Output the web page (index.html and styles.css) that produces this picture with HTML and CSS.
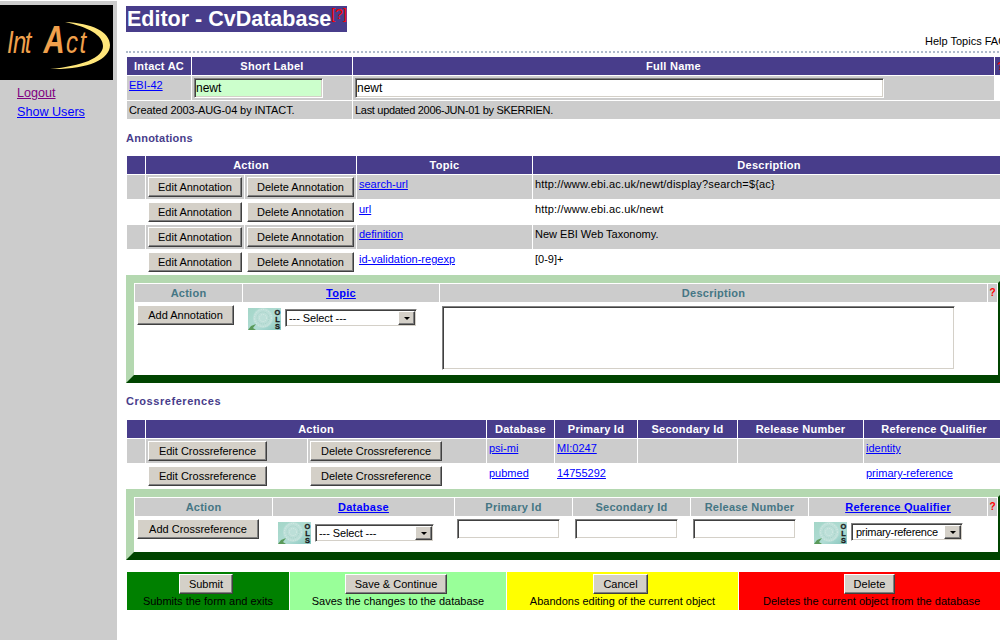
FILE: index.html
```html
<!DOCTYPE html>
<html lang="en">
<head>
<meta charset="utf-8">
<title>Editor - CvDatabase</title>
<link rel="stylesheet" href="styles.css">
</head>
<body>
<svg class="defs" width="0" height="0" aria-hidden="true">
  <defs>
    <linearGradient id="olsbg" x1="0" y1="0" x2="1" y2="1">
      <stop offset="0" stop-color="#a4d6c8"/>
      <stop offset="0.6" stop-color="#b0dcd4"/>
      <stop offset="1" stop-color="#84c4bc"/>
    </linearGradient>
    <symbol id="ols" viewBox="0 0 33 22">
      <rect width="33" height="22" fill="url(#olsbg)"/>
      <circle cx="15" cy="10" r="10" fill="#bcdfd8"/>
      <circle cx="15" cy="10" r="8.5" fill="none" stroke="#d8ece6" stroke-dasharray="1 1.5"/>
      <circle cx="15" cy="10" r="6" fill="none" stroke="#a4d0c6" stroke-dasharray="1 1"/>
      <circle cx="15" cy="10" r="3.5" fill="none" stroke="#d8ece6" stroke-dasharray="1 1"/>
      <path d="M0 22 L3 18 L8 16 L5 20 L8 22 Z" fill="#5a9a5a"/>
      <text x="29.5" y="7" class="ols-t">O</text>
      <text x="29.5" y="14" class="ols-t">L</text>
      <text x="29.5" y="21" class="ols-t">S</text>
    </symbol>
  </defs>
</svg>
<aside class="side">
  <svg class="logo" width="113" height="75" viewBox="0 0 113 75" role="img" aria-label="IntAct">
    <rect width="113" height="75" fill="#000"/>
    <path d="M65 17 C92 18 110 27 110 40 C110 55 86 65 50 64 C82 61 103 53 103 41 C103 30 88 22 65 17 Z" fill="#ffe67a"/>
    <g transform="scale(.75 1)">
      <text x="9.3 17.5 33" y="48" class="logo-t">Int</text>
      <text x="58" y="48" class="logo-a">A</text>
      <text x="88 106" y="48" class="logo-t">ct</text>
    </g>
  </svg>
  <nav class="side-nav">
    <a class="visited" href="#">Logout</a>
    <a href="#">Show Users</a>
  </nav>
</aside>
<main class="main">
  <h1 class="title">Editor - CvDatabase<sup class="title-help">[?]</sup></h1>
  <div class="toplinks">Help Topics FAQ</div>
  <hr class="dots">

  <table class="grid t-cv">
    <colgroup><col class="c64"><col class="c160"><col class="c641"><col class="c12"></colgroup>
    <tr class="head"><th>Intact AC</th><th>Short Label</th><th>Full Name</th><th class="q">?</th></tr>
    <tr class="gray tall">
      <td><a href="#">EBI-42</a></td>
      <td><input class="field shortlabel" value="newt"></td>
      <td><input class="field fullname" value="newt"></td>
      <td class="blank"></td>
    </tr>
    <tr class="gray">
      <td colspan="2" class="created">Created 2003-AUG-04 by INTACT.</td>
      <td colspan="2" class="updated">Last updated 2006-JUN-01 by SKERRIEN.</td>
    </tr>
  </table>

  <h2 class="section s-ann">Annotations</h2>
  <table class="grid t-ann">
    <colgroup><col class="c18"><col class="c98"><col class="c111"><col class="c175"><col class="c472"></colgroup>
    <tr class="head"><th></th><th colspan="2">Action</th><th>Topic</th><th>Description</th></tr>
    <tr class="gray">
      <td></td><td><button class="btn w94">Edit Annotation</button></td><td><button class="btn w107">Delete Annotation</button></td>
      <td><a href="#">search-url</a></td><td class="wide">http://www.ebi.ac.uk/newt/display?search=${ac}</td>
    </tr>
    <tr>
      <td></td><td><button class="btn w94">Edit Annotation</button></td><td><button class="btn w107">Delete Annotation</button></td>
      <td><a href="#">url</a></td><td class="wide">http://www.ebi.ac.uk/newt</td>
    </tr>
    <tr class="gray">
      <td></td><td><button class="btn w94">Edit Annotation</button></td><td><button class="btn w107">Delete Annotation</button></td>
      <td><a href="#">definition</a></td><td>New EBI Web Taxonomy.</td>
    </tr>
    <tr>
      <td></td><td><button class="btn w94">Edit Annotation</button></td><td><button class="btn w107">Delete Annotation</button></td>
      <td><a href="#">id-validation-regexp</a></td><td>[0-9]+</td>
    </tr>
  </table>

  <section class="panel">
    <table class="grid t-newann">
      <colgroup><col class="c107"><col class="c196"><col class="c547"><col class="c9"></colgroup>
      <tr class="subhead"><th>Action</th><th><a href="#">Topic</a></th><th>Description</th><th class="q">?</th></tr>
      <tr>
        <td><button class="btn w97">Add Annotation</button></td>
        <td>
          <div class="picker">
            <svg class="ols" width="33" height="22"><use href="#ols"/></svg>
            <span class="sel w132"><select><option>--- Select ---</option></select></span>
          </div>
        </td>
        <td><textarea class="field desc"></textarea></td>
        <td></td>
      </tr>
    </table>
  </section>

  <h2 class="section s-xref">Crossreferences</h2>
  <table class="grid t-xref">
    <colgroup><col class="c18"><col class="c161"><col class="c178"><col class="c67"><col class="c82"><col class="c99"><col class="c125"><col class="c140"></colgroup>
    <tr class="head"><th></th><th colspan="2">Action</th><th>Database</th><th>Primary Id</th><th>Secondary Id</th><th>Release Number</th><th>Reference Qualifier</th></tr>
    <tr class="gray">
      <td></td><td><button class="btn w119">Edit Crossreference</button></td><td class="inset"><button class="btn w132">Delete Crossreference</button></td>
      <td><a href="#">psi-mi</a></td><td><a href="#">MI:0247</a></td><td></td><td></td><td><a href="#">identity</a></td>
    </tr>
    <tr>
      <td></td><td><button class="btn w119">Edit Crossreference</button></td><td class="inset"><button class="btn w132">Delete Crossreference</button></td>
      <td><a href="#">pubmed</a></td><td><a href="#">14755292</a></td><td></td><td></td><td><a href="#">primary-reference</a></td>
    </tr>
  </table>

  <section class="panel">
    <table class="grid t-newxref">
      <colgroup><col class="c137"><col class="c181"><col class="c117"><col class="c117"><col class="c117"><col class="c178"><col class="c9"></colgroup>
      <tr class="subhead"><th>Action</th><th><a href="#">Database</a></th><th>Primary Id</th><th>Secondary Id</th><th>Release Number</th><th><a href="#">Reference Qualifier</a></th><th class="q">?</th></tr>
      <tr>
        <td><button class="btn w122">Add Crossreference</button></td>
        <td>
          <div class="picker">
            <svg class="ols" width="33" height="22"><use href="#ols"/></svg>
            <span class="sel w119 low"><select><option>--- Select ---</option></select></span>
          </div>
        </td>
        <td><input class="field idfield"></td>
        <td><input class="field idfield"></td>
        <td><input class="field idfield"></td>
        <td>
          <div class="picker">
            <svg class="ols" width="33" height="22"><use href="#ols"/></svg>
            <span class="sel w112"><select><option>primary-reference</option></select></span>
          </div>
        </td>
        <td></td>
      </tr>
    </table>
  </section>

  <table class="grid t-actions">
    <colgroup><col class="c162"><col class="c216"><col class="c231"><col class="c265"></colgroup>
    <tr>
      <td class="a-submit"><button class="btn w54">Submit</button><div>Submits the form and exits</div></td>
      <td class="a-save"><button class="btn w102">Save &amp; Continue</button><div>Saves the changes to the database</div></td>
      <td class="a-cancel"><button class="btn w55">Cancel</button><div>Abandons editing of the current object</div></td>
      <td class="a-delete"><button class="btn w51">Delete</button><div>Deletes the current object from the database</div></td>
    </tr>
  </table>
</main>
</body>
</html>
```
FILE: styles.css
```css
* { box-sizing: border-box; }
html, body { margin: 0; height: 640px; overflow: hidden; background: #fff; }
body {
  display: flex;
  font: 11px/14px "Liberation Sans", Arial, sans-serif;
  color: #000;
}
.defs { position: absolute; }
a { color: #00f; }
a.visited { color: #800080; }

.side {
  flex: 0 0 117px;
  margin-top: 1px;
  padding-top: 4px;
  background: #ccc;
}
.logo { display: block; }
.logo-t { font: italic 32px "Liberation Sans", Arial, sans-serif; fill: #f0a04c; }
.logo-a { font: italic 700 39px "Liberation Sans", Arial, sans-serif; fill: #f0a04c; }
.ols-t { font: 900 7.5px "Liberation Sans", Arial, sans-serif; fill: #1a1a1a; stroke: #1a1a1a; stroke-width: .3; text-anchor: middle; }
.side-nav {
  display: flex;
  flex-direction: column;
  gap: 4px;
  padding: 6px 0 0 17px;
  font-size: 12.6px;
  line-height: 15px;
  align-items: flex-start;
}

.main { flex: 1 1 0; min-width: 0; overflow: hidden; padding-left: 9px; }
.title {
  display: inline-block;
  margin: 6px 0 0;
  height: 26px;
  padding: 1px 0 0 1px;
  background: #483d8b;
  color: #fff;
  font-size: 21.5px;
  line-height: 25px;
  white-space: nowrap;
  vertical-align: top;
}
.title-help {
  color: #f00;
  font-size: 14px;
  font-weight: 400;
  line-height: 12px;
  vertical-align: 7px;
}
.toplinks {
  padding: 2px 0 0 799px;
  height: 19px;
  white-space: nowrap;
}
.dots { margin: 0 0 3px; border: 0; border-top: 2px dotted #b0bccc; height: 2px; width: 900px; }

.grid { border-collapse: separate; border-spacing: 1px; table-layout: fixed; width: max-content; }
.grid td, .grid th { padding: 2px; vertical-align: top; overflow: hidden; white-space: nowrap; }
.grid th { padding: 0; height: 18px; line-height: 18px; text-align: center; font-weight: 700; letter-spacing: .25px; }
.head th { background: #483d8b; color: #fff; }
.head th.q { color: #f00; text-align: left; padding-left: 2px; letter-spacing: 0; }
.subhead th { background: #ccc; color: #457684; }
.subhead th.q { color: #f00; font-size: 10px; letter-spacing: 0; }
.gray td { background: #ccc; }
.gray td.blank { background: #fff; }
.t-cv .gray td { height: 18px; line-height: 14px; }
.t-cv .tall td { height: 24px; }
.t-ann td, .t-xref td { height: 24px; }
.created { letter-spacing: -.1px; }
.updated { letter-spacing: -.3px; }
.wide { letter-spacing: .17px; }
.inset { padding-left: 2px; }

.c9 { width: 9px; } .c12 { width: 12px; } .c18 { width: 18px; }
.c64 { width: 64px; } .c67 { width: 67px; } .c82 { width: 82px; }
.c98 { width: 98px; } .c99 { width: 99px; } .c107 { width: 107px; }
.c111 { width: 111px; } .c117 { width: 117px; } .c125 { width: 125px; }
.c137 { width: 137px; } .c140 { width: 140px; } .c160 { width: 160px; }
.c161 { width: 161px; } .c162 { width: 162px; } .c175 { width: 175px; }
.c178 { width: 178px; } .c181 { width: 181px; } .c196 { width: 196px; }
.c216 { width: 216px; } .c231 { width: 231px; } .c265 { width: 265px; }
.c472 { width: 472px; } .c547 { width: 547px; } .c641 { width: 641px; }

.section { margin: 0; font-size: 11px; line-height: 14px; color: #483d8b; font-weight: 700; }
.s-ann { padding: 11px 0 10px; letter-spacing: .25px; }
.s-xref { padding: 11px 0 11px; letter-spacing: .55px; }

.btn {
  display: block;
  height: 20px;
  padding: 0;
  border: 1px solid;
  border-color: #fff #404040 #404040 #fff;
  box-shadow: inset -1px -1px #808080, inset 1px 1px #d4d0c8;
  background: #d4d0c8;
  color: #000;
  font: 11px/16px "Liberation Sans", Arial, sans-serif;
  white-space: nowrap;
}
.w51 { width: 51px; } .w54 { width: 54px; } .w55 { width: 55px; }
.w94 { width: 94px; } .w97 { width: 97px; } .w102 { width: 102px; }
.w107 { width: 107px; } .btn.w119 { width: 119px; } .w122 { width: 122px; }
.btn.w132 { width: 132px; }

.field {
  display: block;
  margin: 0;
  padding: 0 2px 0 1px;
  height: 20px;
  border: 1px solid;
  border-color: #808080 #fff #fff #808080;
  box-shadow: inset 1px 1px #404040, inset -1px -1px #d4d0c8;
  background: #fff;
  font: 12px "Liberation Sans", Arial, sans-serif;
  outline: 0;
}
.shortlabel { width: 129px; background: #cfc; }
.fullname { width: 529px; }
.idfield { width: 103px; }
.desc { width: 513px; height: 64px; margin-top: 1px; resize: none; }
.t-newann tr + tr td { height: 71px; }
.t-newxref tr + tr td { height: 34px; }

.panel {
  width: 880px;
  border: 8px solid;
  border-color: #b4d8b0 #004400 #004400 #b4d8b0;
}

.picker { display: flex; align-items: flex-start; gap: 4px; padding: 3px 0 0 3px; }
.ols { display: block; flex: none; }
.sel { position: relative; display: block; flex: none; height: 18px; margin-top: 1px; }
.sel.low { margin-top: 2px; }
.sel.w132 { width: 132px; } .sel.w119 { width: 119px; } .sel.w112 { width: 112px; }
.sel select {
  display: block;
  appearance: none;
  width: 100%;
  height: 18px;
  margin: 0;
  padding: 0 17px 0 3px;
  border: 1px solid;
  border-color: #808080 #fff #fff #808080;
  box-shadow: inset 1px 1px #404040, inset -1px -1px #d4d0c8;
  border-radius: 0;
  background: #fff;
  color: #000;
  font: 11px "Liberation Sans", Arial, sans-serif;
  letter-spacing: -.1px;
}
.sel.w112 select { padding-left: 4px; letter-spacing: -.3px; }
.sel::after {
  content: "";
  position: absolute;
  top: 2px; right: 2px; bottom: 2px;
  width: 15px;
  background: #d4d0c8;
  border: 1px solid;
  border-color: #fff #404040 #404040 #fff;
  box-shadow: inset -1px -1px #808080;
}
.sel::before {
  content: "";
  position: absolute;
  z-index: 1;
  top: 8px; right: 7px;
  border: 3px solid transparent;
  border-top-color: #000;
  border-bottom: 0;
}

.t-actions { margin-top: 11px; }
.t-actions td { height: 38px; padding: 2px 0; text-align: center; }
.t-actions .btn { display: inline-block; vertical-align: top; margin-right: 4px; }
.a-submit { background: #008000; }
.a-save { background: #9f9; }
.a-cancel { background: #ff0; }
.a-delete { background: #f00; }
```
